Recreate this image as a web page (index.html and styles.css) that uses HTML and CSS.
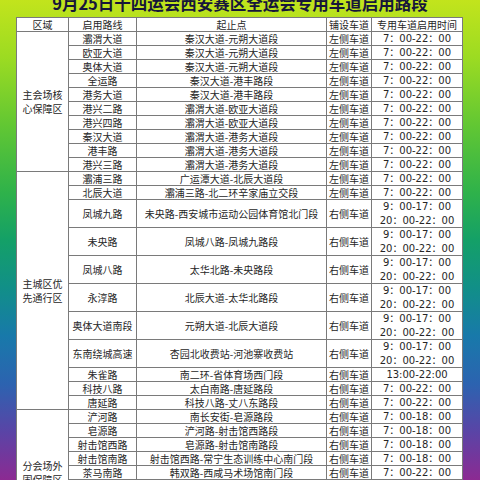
FILE: index.html
```html
<!DOCTYPE html>
<html lang="zh-CN">
<head>
<meta charset="utf-8">
<title>专用车道启用路段</title>
<link rel="stylesheet" href="styles.css">
</head>
<body>
<div class="page">
  <div class="title">9月25日十四运会西安赛区全运会专用车道启用路段</div>
  <div class="grid">
    <div class="c c1">区域</div>
    <div class="c c2">启用路线</div>
    <div class="c c3">起止点</div>
    <div class="c c4">铺设车道</div>
    <div class="c c5">专用车道启用时间</div>

    <div class="c c1 s10">主会场核<br>心保障区</div>
    <div class="c c2">灞渭大道</div><div class="c c3">秦汉大道-元朔大道段</div><div class="c c4">左侧车道</div><div class="c c5 t">7：00-22：00</div>
    <div class="c c2">欧亚大道</div><div class="c c3">秦汉大道-元朔大道段</div><div class="c c4">左侧车道</div><div class="c c5 t">7：00-22：00</div>
    <div class="c c2">奥体大道</div><div class="c c3">秦汉大道-元朔大道段</div><div class="c c4">左侧车道</div><div class="c c5 t">7：00-22：00</div>
    <div class="c c2">全运路</div><div class="c c3">秦汉大道-港丰路段</div><div class="c c4">左侧车道</div><div class="c c5 t">7：00-22：00</div>
    <div class="c c2">港务大道</div><div class="c c3">秦汉大道-港丰路段</div><div class="c c4">左侧车道</div><div class="c c5 t">7：00-22：00</div>
    <div class="c c2">港兴二路</div><div class="c c3">灞渭大道-欧亚大道段</div><div class="c c4">左侧车道</div><div class="c c5 t">7：00-22：00</div>
    <div class="c c2">港兴四路</div><div class="c c3">灞渭大道-欧亚大道段</div><div class="c c4">左侧车道</div><div class="c c5 t">7：00-22：00</div>
    <div class="c c2">秦汉大道</div><div class="c c3">灞渭大道-港务大道段</div><div class="c c4">左侧车道</div><div class="c c5 t">7：00-22：00</div>
    <div class="c c2">港丰路</div><div class="c c3">灞渭大道-港务大道段</div><div class="c c4">左侧车道</div><div class="c c5 t">7：00-22：00</div>
    <div class="c c2">港兴三路</div><div class="c c3">灞渭大道-港务大道段</div><div class="c c4">左侧车道</div><div class="c c5 t">7：00-22：00</div>

    <div class="c c1 s17">主城区优<br>先通行区</div>
    <div class="c c2">灞浦三路</div><div class="c c3">广运潭大道-北辰大道段</div><div class="c c4">左侧车道</div><div class="c c5 t">7：00-22：00</div>
    <div class="c c2">北辰大道</div><div class="c c3">灞浦三路-北二环辛家庙立交段</div><div class="c c4">左侧车道</div><div class="c c5 t">7：00-22：00</div>
    <div class="c c2 s2">凤城九路</div><div class="c c3 s2">未央路-西安城市运动公园体育馆北门段</div><div class="c c4 s2">右侧车道</div><div class="c c5 t s2">9：00-17：00<br>20：00-22：00</div>
    <div class="c c2 s2">未央路</div><div class="c c3 s2">凤城八路-凤城九路段</div><div class="c c4 s2">右侧车道</div><div class="c c5 t s2">9：00-17：00<br>20：00-22：00</div>
    <div class="c c2 s2">凤城八路</div><div class="c c3 s2">太华北路-未央路段</div><div class="c c4 s2">右侧车道</div><div class="c c5 t s2">9：00-17：00<br>20：00-22：00</div>
    <div class="c c2 s2">永淳路</div><div class="c c3 s2">北辰大道-太华北路段</div><div class="c c4 s2">右侧车道</div><div class="c c5 t s2">9：00-17：00<br>20：00-22：00</div>
    <div class="c c2 s2">奥体大道南段</div><div class="c c3 s2">元朔大道-北辰大道段</div><div class="c c4 s2">右侧车道</div><div class="c c5 t s2">9：00-17：00<br>20：00-22：00</div>
    <div class="c c2 s2">东南绕城高速</div><div class="c c3 s2">杏园北收费站-河池寨收费站</div><div class="c c4 s2">右侧车道</div><div class="c c5 t s2">9：00-17：00<br>20：00-22：00</div>
    <div class="c c2">朱雀路</div><div class="c c3">南二环-省体育场西门段</div><div class="c c4">右侧车道</div><div class="c c5 t">13:00-22:00</div>
    <div class="c c2">科技八路</div><div class="c c3">太白南路-唐延路段</div><div class="c c4">右侧车道</div><div class="c c5 t">7：00-22：00</div>
    <div class="c c2">唐延路</div><div class="c c3">科技八路-丈八东路段</div><div class="c c4">右侧车道</div><div class="c c5 t">7：00-22：00</div>

    <div class="c c1 s9">分会场外<br>围保障区</div>
    <div class="c c2">浐河路</div><div class="c c3">南长安街-皂源路段</div><div class="c c4">右侧车道</div><div class="c c5 t">7：00-18：00</div>
    <div class="c c2">皂源路</div><div class="c c3">浐河路-射击馆西路段</div><div class="c c4">右侧车道</div><div class="c c5 t">7：00-18：00</div>
    <div class="c c2">射击馆西路</div><div class="c c3">皂源路-射击馆南路段</div><div class="c c4">右侧车道</div><div class="c c5 t">7：00-18：00</div>
    <div class="c c2">射击馆南路</div><div class="c c3">射击馆西路-常宁生态训练中心南门段</div><div class="c c4">右侧车道</div><div class="c c5 t">7：00-18：00</div>
    <div class="c c2">茶马南路</div><div class="c c3">韩双路-西咸马术场馆南门段</div><div class="c c4">右侧车道</div><div class="c c5 t">7：00-22：00</div>
    <div class="c c2"></div><div class="c c3"></div><div class="c c4"></div><div class="c c5"></div>
    <div class="c c2"></div><div class="c c3"></div><div class="c c4"></div><div class="c c5"></div>
    <div class="c c2"></div><div class="c c3"></div><div class="c c4"></div><div class="c c5"></div>
    <div class="c c2"></div><div class="c c3"></div><div class="c c4"></div><div class="c c5"></div>
  </div>
</div>
</body>
</html>
```
FILE: styles.css
```css
html, body {
  margin: 0;
  padding: 0;
}
.page {
  width: 480px;
  height: 480px;
  overflow: hidden;
  display: flex;
  flex-direction: column;
  align-items: flex-start;
  background: linear-gradient(to bottom,
    #c2e41c 0%,
    #9cdb22 12%,
    #62c733 26%,
    #2fb24a 40%,
    #14a067 50%,
    #118f88 60%,
    #1879aa 70%,
    #2c63b0 80%,
    #5a44a6 90%,
    #8c2a92 100%);
  font-family: "Noto Sans CJK SC", sans-serif;
}
.title {
  width: 480px;
  margin-top: -5px;
  height: 17px;
  line-height: 17px;
  text-align: center;
  font-size: 16.5px;
  font-weight: bold;
  color: #16163a;
  white-space: nowrap;
}
.grid {
  margin-top: 5px;
  margin-left: 16px;
  display: grid;
  grid-template-columns: 51px 67px 189px 44px 90px;
  grid-auto-rows: 13px;
  gap: 1px;
  padding: 1px;
  background: #7a7a7a;
}
.c {
  background: #ffffff;
  display: flex;
  align-items: center;
  justify-content: center;
  text-align: center;
  font-size: 10px;
  line-height: 13px;
  color: #262626;
  white-space: nowrap;
  overflow: hidden;
}
.c1 { grid-column: 1; line-height: 14px; }
.c2 { grid-column: 2; }
.c3 { grid-column: 3; }
.c4 { grid-column: 4; }
.c5 { grid-column: 5; }
.t {
  font-family: "DejaVu Sans", "Noto Sans CJK SC", sans-serif;
  font-size: 10px;
}
.s2 { grid-row: span 2; line-height: 14px; }
.s9 { grid-row: span 9; }
.s10 { grid-row: span 10; }
.s17 { grid-row: span 17; }
```
